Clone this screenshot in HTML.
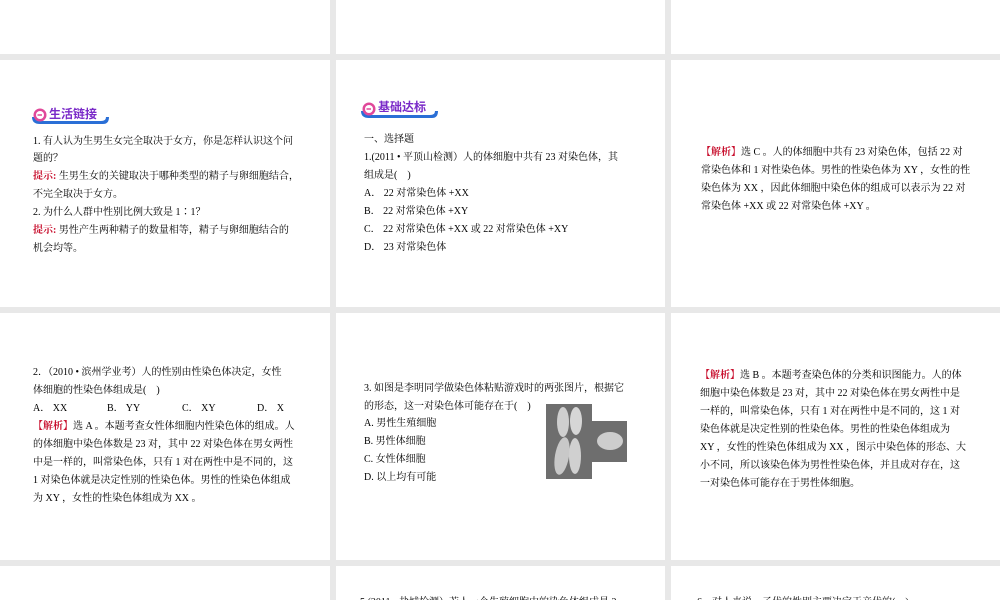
<!DOCTYPE html>
<html><head><meta charset="utf-8"><style>
*{margin:0;padding:0;box-sizing:border-box}
html,body{width:1000px;height:600px;overflow:hidden}
body{background:#e8e8e8;position:relative;font-family:"Liberation Serif","Noto Serif CJK SC","Noto Sans CJK SC",serif;font-size:10px;color:#000}
.p{position:absolute;background:#fff;overflow:hidden}
.t{position:absolute;white-space:nowrap;line-height:12px}
.r{color:#c8102e;font-weight:bold}
.badge{position:absolute;width:80px;height:22px}
</style></head><body>
<div class="p" style="left:0;top:0;width:330px;height:54px"></div>
<div class="p" style="left:336px;top:0;width:329px;height:54px"></div>
<div class="p" style="left:671px;top:0;width:329px;height:54px"></div>

<div class="p" style="left:0;top:60px;width:330px;height:247px"></div>
<div class="p" style="left:336px;top:60px;width:329px;height:247px"></div>
<div class="p" style="left:671px;top:60px;width:329px;height:247px"></div>

<div class="p" style="left:0;top:313px;width:330px;height:247px"></div>
<div class="p" style="left:336px;top:313px;width:329px;height:247px"></div>
<div class="p" style="left:671px;top:313px;width:329px;height:247px"></div>

<div class="p" style="left:0;top:566px;width:330px;height:34px"></div>
<div class="p" style="left:336px;top:566px;width:329px;height:34px"></div>
<div class="p" style="left:671px;top:566px;width:329px;height:34px"></div>

<svg class="badge" style="left:30px;top:104px" viewBox="0 0 80 22">
<path d="M2 13 Q2 20 10 20 L73 20 Q79 20 79 13 L76 13 Q76 17 71 17 L10 17 Q5 17 5 13Z" fill="#2a6fd6"/>
<circle cx="10" cy="11" r="6.5" fill="#e0489a"/><circle cx="10" cy="11" r="4" fill="#fff"/><path d="M7.5 11 H12" stroke="#e0489a" stroke-width="1.5"/>
<text x="19" y="14" font-size="12" font-weight="bold" fill="#7a2ac8" font-family="Noto Sans CJK SC,sans-serif">生活链接</text></svg>
<svg class="badge" style="left:359px;top:98px" viewBox="0 0 80 22">
<path d="M2 13 Q2 20 10 20 L73 20 Q79 20 79 13 L76 13 Q76 17 71 17 L10 17 Q5 17 5 13Z" fill="#2a6fd6"/>
<circle cx="10" cy="11" r="6.5" fill="#e0489a"/><circle cx="10" cy="11" r="4" fill="#fff"/><path d="M7.5 11 H12" stroke="#e0489a" stroke-width="1.5"/>
<text x="19" y="13" font-size="12" font-weight="bold" fill="#7a2ac8" font-family="Noto Sans CJK SC,sans-serif">基础达标</text></svg>

<div class="t" style="left:33px;top:136px">1. 有人认为生男生女完全取决于女方，你是怎样认识这个问</div>
<div class="t" style="left:33px;top:153px">题的？</div>
<div class="t" style="left:33px;top:171px"><span class="r">提示:</span> 生男生女的关键取决于哪种类型的精子与卵细胞结合，</div>
<div class="t" style="left:33px;top:189px">不完全取决于女方。</div>
<div class="t" style="left:33px;top:207px">2. 为什么人群中性别比例大致是 1∶1？</div>
<div class="t" style="left:33px;top:225px"><span class="r">提示:</span> 男性产生两种精子的数量相等，精子与卵细胞结合的</div>
<div class="t" style="left:33px;top:243px">机会均等。</div>

<div class="t" style="left:364px;top:134px">一、选择题</div>
<div class="t" style="left:364px;top:152px">1.(2011 • 平顶山检测）人的体细胞中共有 23 对染色体，其</div>
<div class="t" style="left:364px;top:170px">组成是(&nbsp;&nbsp;&nbsp;&nbsp;)</div>
<div class="t" style="left:364px;top:188px">A． 22 对常染色体 +XX</div>
<div class="t" style="left:364px;top:206px">B． 22 对常染色体 +XY</div>
<div class="t" style="left:364px;top:224px">C． 22 对常染色体 +XX 或 22 对常染色体 +XY</div>
<div class="t" style="left:364px;top:242px">D． 23 对常染色体</div>

<div class="t" style="left:701px;top:147px"><span class="r">【解析】</span>选 C 。人的体细胞中共有 23 对染色体，包括 22 对</div>
<div class="t" style="left:701px;top:165px">常染色体和 1 对性染色体。男性的性染色体为 XY ，女性的性</div>
<div class="t" style="left:701px;top:183px">染色体为 XX ，因此体细胞中染色体的组成可以表示为 22 对</div>
<div class="t" style="left:701px;top:201px">常染色体 +XX 或 22 对常染色体 +XY 。</div>

<div class="t" style="left:33px;top:367px">2．（2010 • 滨州学业考）人的性别由性染色体决定，女性</div>
<div class="t" style="left:33px;top:385px">体细胞的性染色体组成是(&nbsp;&nbsp;&nbsp;&nbsp;)</div>
<div class="t" style="left:33px;top:403px">A． XX</div>
<div class="t" style="left:107px;top:403px">B． YY</div>
<div class="t" style="left:182px;top:403px">C． XY</div>
<div class="t" style="left:257px;top:403px">D． X</div>
<div class="t" style="left:33px;top:421px"><span class="r">【解析】</span>选 A 。本题考查女性体细胞内性染色体的组成。人</div>
<div class="t" style="left:33px;top:439px">的体细胞中染色体数是 23 对，其中 22 对染色体在男女两性</div>
<div class="t" style="left:33px;top:457px">中是一样的，叫常染色体，只有 1 对在两性中是不同的，这</div>
<div class="t" style="left:33px;top:475px">1 对染色体就是决定性别的性染色体。男性的性染色体组成</div>
<div class="t" style="left:33px;top:493px">为 XY ，女性的性染色体组成为 XX 。</div>

<div class="t" style="left:364px;top:383px">3. 如图是李明同学做染色体粘贴游戏时的两张图片，根据它</div>
<div class="t" style="left:364px;top:401px">的形态，这一对染色体可能存在于(&nbsp;&nbsp;&nbsp;&nbsp;)</div>
<div class="t" style="left:364px;top:418px">A. 男性生殖细胞</div>
<div class="t" style="left:364px;top:436px">B. 男性体细胞</div>
<div class="t" style="left:364px;top:454px">C. 女性体细胞</div>
<div class="t" style="left:364px;top:472px">D. 以上均有可能</div>
<svg style="position:absolute;left:546px;top:404px" width="82" height="75" viewBox="0 0 82 75">
<rect x="0" y="0" width="46" height="75" fill="#6e6e6e"/>
<rect x="46" y="17" width="35" height="41" fill="#6e6e6e"/>
<ellipse cx="17" cy="18" rx="6" ry="15" fill="#cfcfcf"/><ellipse cx="30" cy="17" rx="6" ry="14" fill="#d6d6d6"/>
<ellipse cx="16" cy="52" rx="7" ry="19" fill="#c8c8c8" transform="rotate(10 16 52)"/><ellipse cx="29" cy="52" rx="6" ry="18" fill="#d0d0d0"/>
<ellipse cx="64" cy="37" rx="13" ry="9" fill="#cdcdcd"/>
</svg>

<div class="t" style="left:700px;top:370px"><span class="r">【解析】</span>选 B 。本题考查染色体的分类和识图能力。人的体</div>
<div class="t" style="left:700px;top:388px">细胞中染色体数是 23 对，其中 22 对染色体在男女两性中是</div>
<div class="t" style="left:700px;top:406px">一样的，叫常染色体，只有 1 对在两性中是不同的，这 1 对</div>
<div class="t" style="left:700px;top:424px">染色体就是决定性别的性染色体。男性的性染色体组成为</div>
<div class="t" style="left:700px;top:442px">XY ，女性的性染色体组成为 XX ，图示中染色体的形态、大</div>
<div class="t" style="left:700px;top:460px">小不同，所以该染色体为男性性染色体，并且成对存在，这</div>
<div class="t" style="left:700px;top:478px">一对染色体可能存在于男性体细胞。</div>

<div class="t" style="left:360px;top:597px">5.(2011 • 盐城检测）若人一个生殖细胞中的染色体组成是 2</div>
<div class="t" style="left:697px;top:597px">6．对人来说，子代的性别主要决定于亲代的(&nbsp;&nbsp;&nbsp;&nbsp;)</div>
</body></html>
